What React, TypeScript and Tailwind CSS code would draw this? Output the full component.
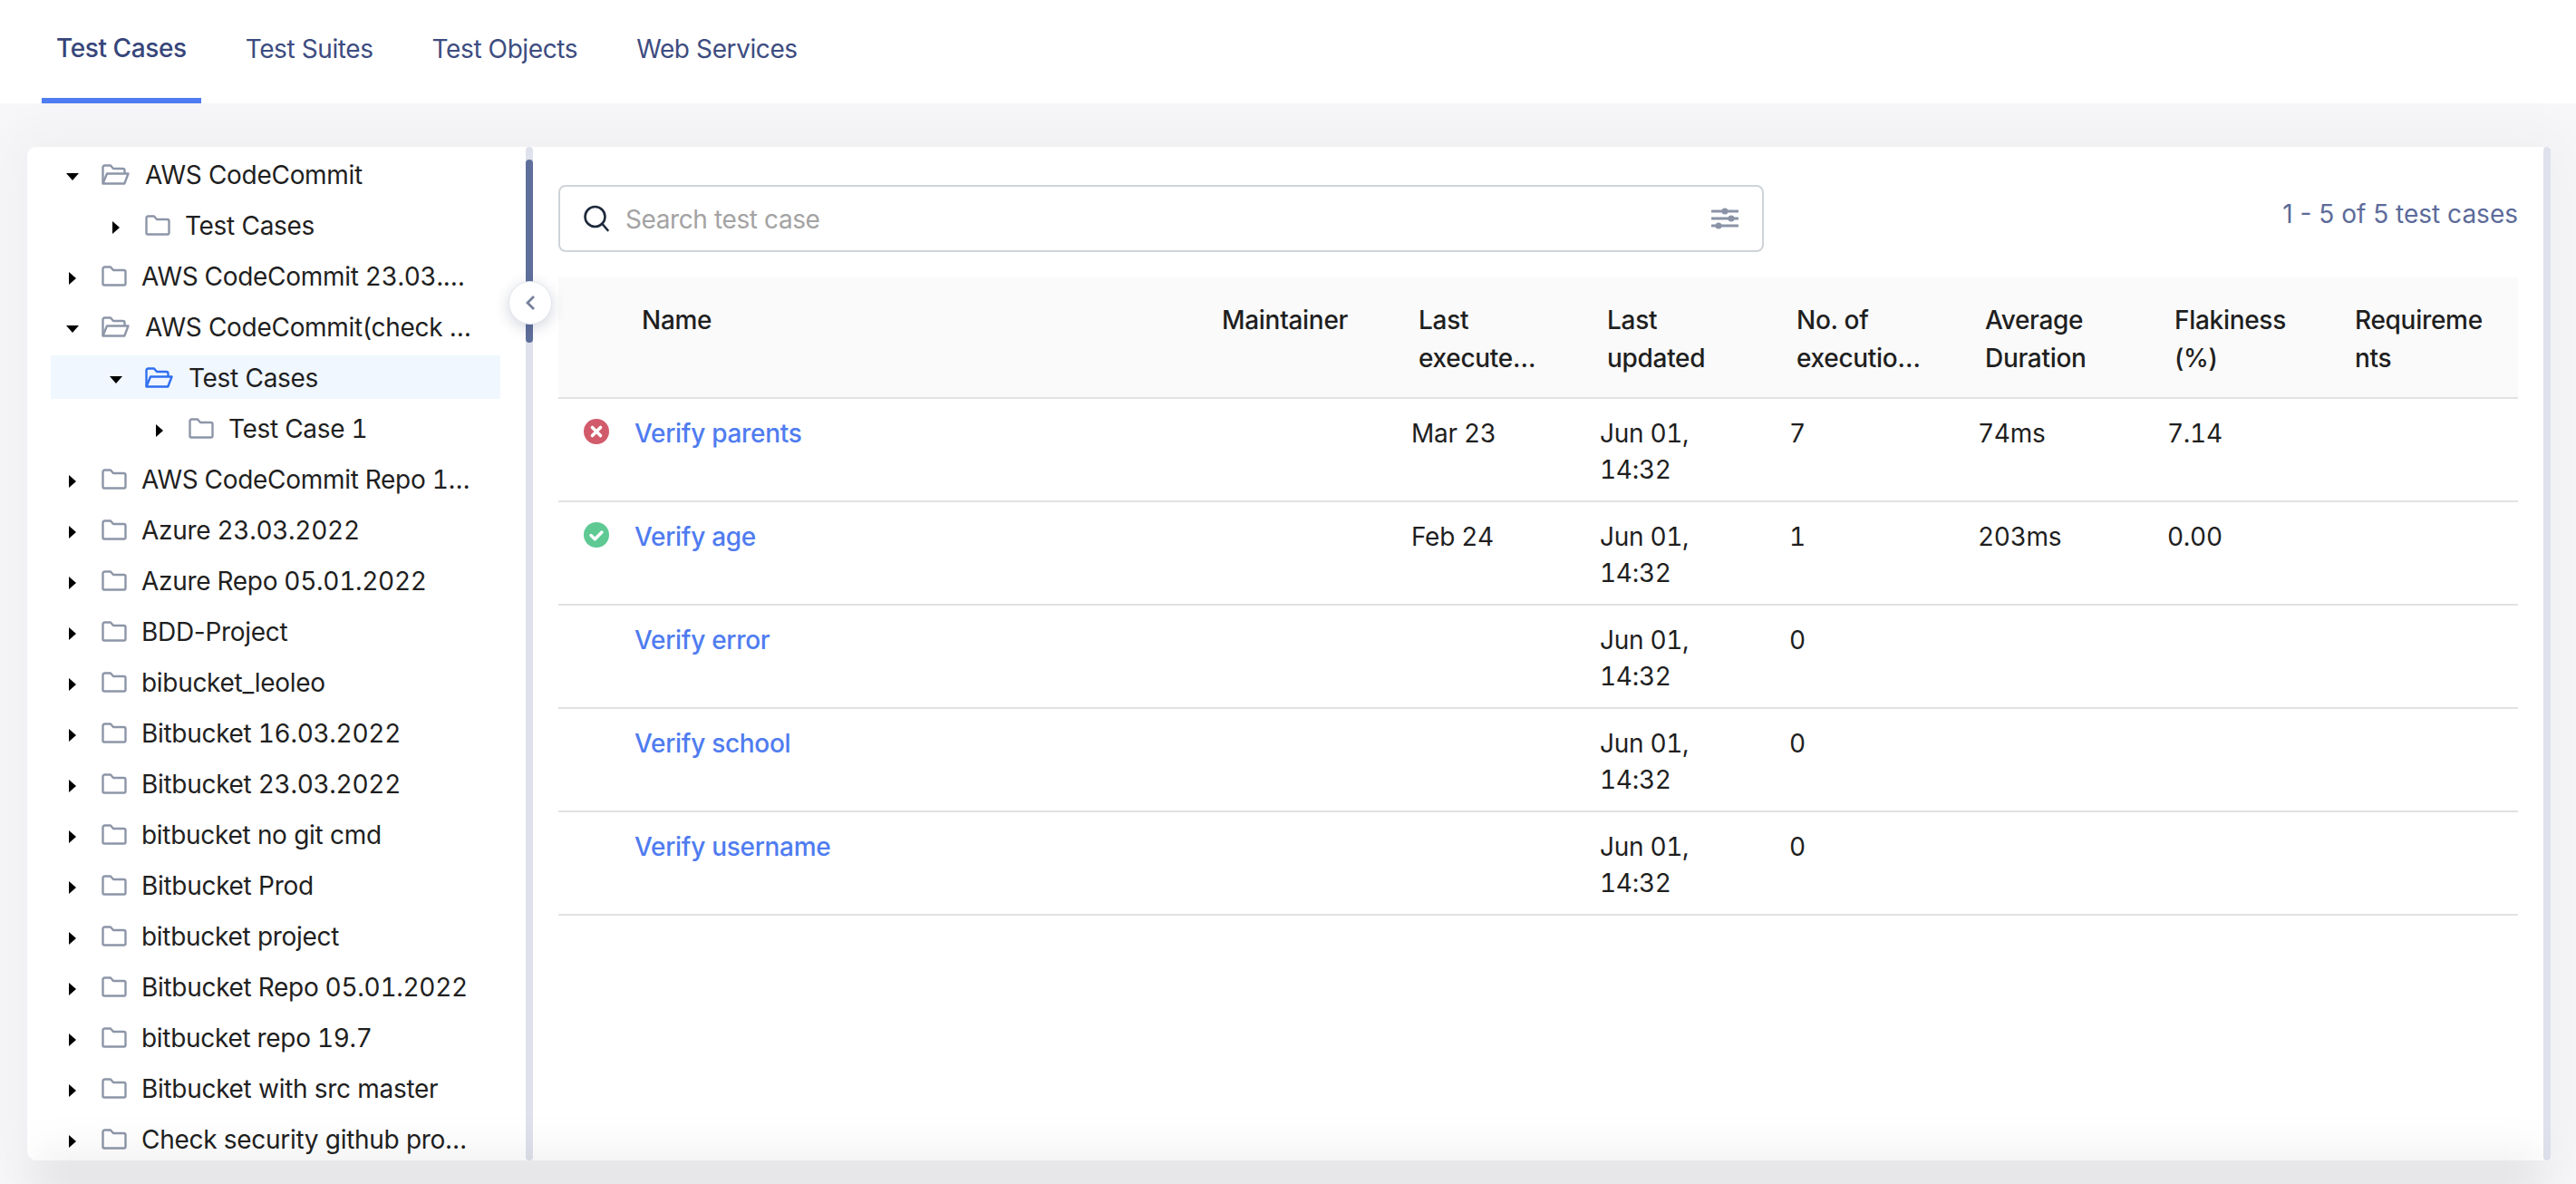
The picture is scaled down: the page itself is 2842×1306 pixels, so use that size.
const tabs = ["Test Cases", "Test Suites", "Test Objects", "Web Services"];

type TreeRow = { label: string; depth: 0 | 1 | 2; open?: boolean; selected?: boolean };

const tree: TreeRow[] = [
  { label: "AWS CodeCommit", depth: 0, open: true },
  { label: "Test Cases", depth: 1 },
  { label: "AWS CodeCommit 23.03.…", depth: 0 },
  { label: "AWS CodeCommit(check …", depth: 0, open: true },
  { label: "Test Cases", depth: 1, open: true, selected: true },
  { label: "Test Case 1", depth: 2 },
  { label: "AWS CodeCommit Repo 1…", depth: 0 },
  { label: "Azure 23.03.2022", depth: 0 },
  { label: "Azure Repo 05.01.2022", depth: 0 },
  { label: "BDD-Project", depth: 0 },
  { label: "bibucket_leoleo", depth: 0 },
  { label: "Bitbucket 16.03.2022", depth: 0 },
  { label: "Bitbucket 23.03.2022", depth: 0 },
  { label: "bitbucket no git cmd", depth: 0 },
  { label: "Bitbucket Prod", depth: 0 },
  { label: "bitbucket project", depth: 0 },
  { label: "Bitbucket Repo 05.01.2022", depth: 0 },
  { label: "bitbucket repo 19.7", depth: 0 },
  { label: "Bitbucket with src master", depth: 0 },
  { label: "Check security github pro…", depth: 0 },
];

const depthPad = { 0: "pl-[17px]", 1: "pl-[65px]", 2: "pl-[113px]" };

const testCases = [
  { name: "Verify parents", status: "failed", last: "Mar 23", runs: "7", avg: "74ms", flaky: "7.14" },
  { name: "Verify age", status: "passed", last: "Feb 24", runs: "1", avg: "203ms", flaky: "0.00" },
  { name: "Verify error", status: "", last: "", runs: "0", avg: "", flaky: "" },
  { name: "Verify school", status: "", last: "", runs: "0", avg: "", flaky: "" },
  { name: "Verify username", status: "", last: "", runs: "0", avg: "", flaky: "" },
];

const headers = [
  { key: "last", lines: ["Last", "execute…"] },
  { key: "updated", lines: ["Last", "updated"] },
  { key: "runs", lines: ["No. of", "executio…"] },
  { key: "avg", lines: ["Average", "Duration"] },
  { key: "flaky", lines: ["Flakiness", "(%)"] },
  { key: "req", lines: ["Requireme", "nts"] },
];

const gridCols = "grid grid-cols-[717px_208px_208px_209px_208px_209px_199px_204px]";

function Caret({ open }: { open?: boolean }) {
  return (
    <span className="flex w-[14px] shrink-0 justify-center pt-[6px]">
      {open ? (
        <svg width="14" height="8" viewBox="0 0 14 8">
          <path d="M0 0h14L7 8z" fill="#000" />
        </svg>
      ) : (
        <svg width="8" height="14" viewBox="0 0 8 14">
          <path d="M0 0l8 7-8 7z" fill="#000" />
        </svg>
      )}
    </span>
  );
}

function Folder({ open, selected }: { open?: boolean; selected?: boolean }) {
  const color = selected ? "#2f6ff0" : "#8d96a8";
  if (open) {
    return (
      <svg width="31" height="24" viewBox="0 0 31 24" fill="none" stroke={color} strokeWidth="2.4" strokeLinejoin="round" className="shrink-0">
        <path d="M1.5 21V3.5a2 2 0 0 1 2-2h6.5l3 3.5h10.500a2 2 0 0 1 2 2V10" />
        <path d="M1.500 21.500l4.500-11h23.500l-4.200 11z" />
      </svg>
    );
  }
  return (
    <svg width="28" height="24" viewBox="0 0 28 24" fill="none" stroke={color} strokeWidth="2.400" strokeLinejoin="round" className="shrink-0">
      <path d="M1.500 3.500a2 2 0 0 1 2-2h6.500l3 3.500h11.500a2 2 0 0 1 2 2v13a1.500 1.500 0 0 1-1.500 1.500H3a1.500 1.500 0 0 1-1.500-1.500z" />
    </svg>
  );
}

function StatusIcon({ status }: { status: string }) {
  if (status === "failed") {
    return (
      <svg width="28" height="28" viewBox="0 0 28 28">
        <circle cx="14" cy="14" r="14" fill="#d15b6b" />
        <path d="M9.500 9.500l9 9M18.500 9.500l-9 9" stroke="#fff" strokeWidth="3.600" strokeLinecap="round" />
      </svg>
    );
  }
  if (status === "passed") {
    return (
      <svg width="28" height="28" viewBox="0 0 28 28">
        <circle cx="14" cy="14" r="14" fill="#5fc993" />
        <path d="M8 14.500l4.300 4.300L20 11" fill="none" stroke="#fff" strokeWidth="3.400" strokeLinecap="round" strokeLinejoin="round" />
      </svg>
    );
  }
  return <span className="block h-[28px] w-[28px]" />;
}

function TreePanel() {
  return (
    <div className="relative flex w-[558px] shrink-0 rounded-l-[10px] bg-white">
      <div className="h-full flex-1 overflow-hidden pl-[26px] pt-[6px] pr-[28px]">
        {tree.map((row, i) => (
          <div
            key={i}
            className={`mb-[8px] flex h-[48px] items-center ${depthPad[row.depth]} ${row.selected ? "bg-[#f0f7ff]" : ""}`}
          >
            <Caret open={row.open} />
            <span className="ml-[25px] flex shrink-0 items-center pt-[1px]">
              <Folder open={row.open} selected={row.selected} />
            </span>
            <span
              className={`whitespace-nowrap pt-[2px] tracking-[-0.3px] text-[#1f1f1f] ${row.open ? "ml-[17px]" : "ml-[16px]"} ${
                /\d/.test(row.label) ? "tabular-nums" : ""
              }`}
            >
              {row.label}
            </span>
          </div>
        ))}
      </div>
      <div className="relative h-full w-[8px] shrink-0 rounded-full bg-[#dfe2ec]">
        <div className="mt-[14px] h-[202px] rounded-full bg-[#5f6f9b]" />
      </div>
      <button className="absolute right-[-21px] top-[148px] z-10 flex h-[48px] w-[48px] items-center justify-center rounded-full border border-[#e3e6ef] bg-white shadow-[0_4px_16px_rgba(40,50,90,0.2)]">
        <svg width="14" height="18" viewBox="0 0 14 18" fill="none" stroke="#76819a" strokeWidth="2.800" strokeLinejoin="miter">
          <path d="M11 2L4 9l7 7" />
        </svg>
      </button>
    </div>
  );
}

function TestCasesTable() {
  return (
    <div className="tracking-[-0.3px] text-[#1f1f1f]">
      <div className={`${gridCols} h-[134px] border-b-2 border-[#e2e2e2] bg-[#fafafa] pt-[26px] font-medium leading-[42px]`}>
        <div className="pl-[92px]">Name</div>
        <div className="-ml-[9px] pl-[24px]">Maintainer</div>
        {headers.map((h) => (
          <div key={h.key} className="pl-[24px]">
            {h.lines.map((line) => (
              <div key={line}>{line}</div>
            ))}
          </div>
        ))}
      </div>
      {testCases.map((tc) => (
        <div key={tc.name} className={`${gridCols} h-[114px] border-b-2 border-[#e2e2e2] pt-[18px] tabular-nums`}>
          <div className="flex items-start pl-[28px]">
            <span className="mt-[4px]">
              <StatusIcon status={tc.status} />
            </span>
            <a className="ml-[28px] font-medium text-[#4f7cf0]">{tc.name}</a>
          </div>
          <div />
          <div className="pl-[16px]">{tc.last}</div>
          <div className="pl-[16px]">
            Jun 01,
            <br />
            14:32
          </div>
          <div className="pl-[16px]">{tc.runs}</div>
          <div className="pl-[16px]">{tc.avg}</div>
          <div className="pl-[16px]">{tc.flaky}</div>
          <div />
        </div>
      ))}
    </div>
  );
}

function ContentPanel() {
  return (
    <div className="flex min-w-0 flex-1 bg-white">
      <div className="min-w-0 flex-1 pl-[28px] pr-[28px] pt-[42px]">
        <div className="mb-[28px] flex items-start justify-between">
          <div className="flex h-[74px] w-[1330px] items-center rounded-[8px] border-2 border-[#cfd4d9] pl-[26px] pr-[26px]">
            <svg width="28" height="30" viewBox="0 0 28 30" fill="none" stroke="#1e2a3c" strokeWidth="2.600" strokeLinecap="round" className="shrink-0">
              <circle cx="12.500" cy="13" r="11" />
              <path d="M20.500 21l6 7" />
            </svg>
            <span className="ml-[18px] flex-1 pt-[2px] tracking-[-0.4px] text-[#a3a3a3]">Search test case</span>
            <svg width="30" height="26" viewBox="0 0 30 26" className="shrink-0">
              <path d="M1 5h28M1 13h28M1 21h28" stroke="#8a93a6" strokeWidth="3" strokeLinecap="round" fill="none" />
              <circle cx="15" cy="5" r="3.500" fill="#8a93a6" />
              <circle cx="22" cy="13" r="3.500" fill="#8a93a6" />
              <circle cx="8" cy="21" r="3.500" fill="#8a93a6" />
            </svg>
          </div>
          <span className="mt-[12px] text-[#5c6b9a]">1 - 5 of 5 test cases</span>
        </div>
        <TestCasesTable />
      </div>
      <div className="h-full w-[8px] shrink-0 rounded-full bg-[#dfe2ec]" />
    </div>
  );
}

export default function App() {
  return (
    <div className="relative flex h-screen flex-col overflow-hidden bg-[#f8f8fa] font-['Inter',sans-serif] text-[28px] leading-[40px]">
      <nav className="relative z-10 flex h-[114px] shrink-0 gap-[33px] bg-white pl-[46px]">
        {tabs.map((tab, i) => (
          <div
            key={tab}
            className={`flex h-[114px] items-center px-[16px] tracking-[-0.4px] ${
              i === 0 ? "border-b-[6px] border-[#4f7cf0] pb-[2px] font-medium text-[#37467a]" : "pb-[6px] text-[#3d4c80]"
            }`}
          >
            {tab}
          </div>
        ))}
      </nav>
      <main className="flex min-h-0 flex-1 pl-[30px] pr-[28px] pt-[48px] pb-[26px]">
        <div className="flex min-w-0 flex-1 rounded-[10px] shadow-[0_0_60px_30px_rgba(20,30,60,0.03)]">
          <TreePanel />
          <ContentPanel />
        </div>
      </main>
      <div className="pointer-events-none absolute inset-x-[40px] bottom-[-30px] h-[70px] bg-black/5 blur-[20px]" />
    </div>
  );
}
